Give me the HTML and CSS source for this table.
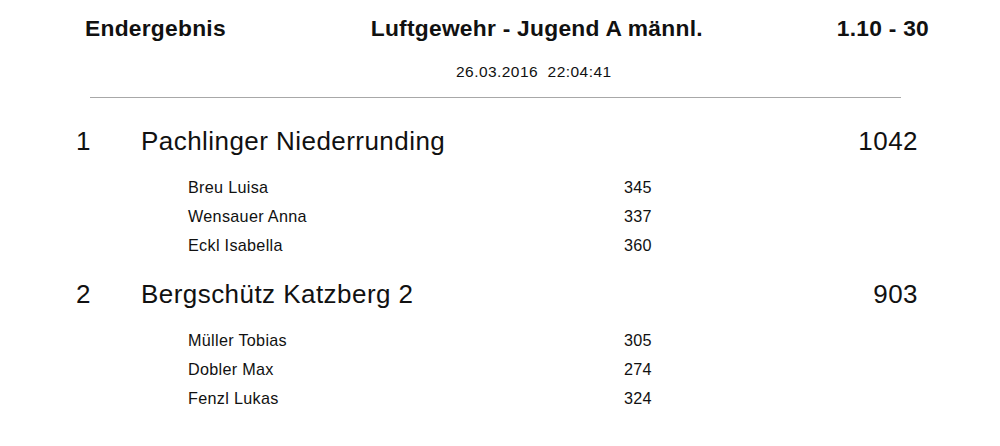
FILE: index.html
```html
<!DOCTYPE html>
<html lang="de">
<head>
<meta charset="utf-8">
<title>Endergebnis</title>
<link rel="stylesheet" href="styles.css">
</head>
<body>
<div class="page">
  <header class="head">
    <div class="head-left">Endergebnis</div>
    <div class="head-center">Luftgewehr - Jugend A männl.</div>
    <div class="head-right">1.10 - 30</div>
  </header>
  <div class="date">26.03.2016&nbsp;&nbsp;22:04:41</div>
  <hr class="rule">

  <section class="team first">
    <div class="team-row">
      <span class="rank">1</span>
      <span class="team-name">Pachlinger Niederrunding</span>
      <span class="total">1042</span>
    </div>
    <ul class="members">
      <li class="member"><span class="m-name">Breu Luisa</span><span class="m-score">345</span></li>
      <li class="member"><span class="m-name">Wensauer Anna</span><span class="m-score">337</span></li>
      <li class="member"><span class="m-name">Eckl Isabella</span><span class="m-score">360</span></li>
    </ul>
  </section>

  <section class="team">
    <div class="team-row">
      <span class="rank">2</span>
      <span class="team-name">Bergschütz Katzberg 2</span>
      <span class="total">903</span>
    </div>
    <ul class="members">
      <li class="member"><span class="m-name">Müller Tobias</span><span class="m-score">305</span></li>
      <li class="member"><span class="m-name">Dobler Max</span><span class="m-score">274</span></li>
      <li class="member"><span class="m-name">Fenzl Lukas</span><span class="m-score">324</span></li>
    </ul>
  </section>
</div>
</body>
</html>
```
FILE: styles.css
```css
html, body {
  margin: 0;
  padding: 0;
  background: #ffffff;
}
body {
  font-family: "Liberation Sans", Arial, sans-serif;
  color: #111111;
  width: 1000px;
  height: 446px;
  overflow: hidden;
}
.page {
  display: flex;
  flex-direction: column;
}
.head {
  display: flex;
  justify-content: space-between;
  align-items: center;
  padding: 14px 71px 0 85px;
  font-weight: bold;
  font-size: 22.8px;
  letter-spacing: 0.25px;
  line-height: 28px;
}
.head-center {
  margin-left: 11px;
}
.date {
  margin-top: 20px;
  padding-left: 456px;
  font-size: 15.5px;
  letter-spacing: 0.45px;
  line-height: 20px;
}
.rule {
  margin: 15px 99px 0 90px;
  border: 0;
  border-top: 1px solid #a8a8a8;
  height: 0;
}
.team {
  margin-top: 17px;
}
.team.first {
  margin-top: 26px;
}
.team-row {
  display: grid;
  grid-template-columns: 65px 1fr auto;
  padding: 0 82px 0 76px;
  font-size: 26px;
  letter-spacing: 0.45px;
  line-height: 34px;
}
.total {
  text-align: right;
}
.members {
  list-style: none;
  margin: 15px 0 0 0;
  padding: 0 0 0 188px;
}
.member {
  display: grid;
  grid-template-columns: 436px auto;
  font-size: 16.2px;
  letter-spacing: 0.3px;
  line-height: 29px;
}
```
